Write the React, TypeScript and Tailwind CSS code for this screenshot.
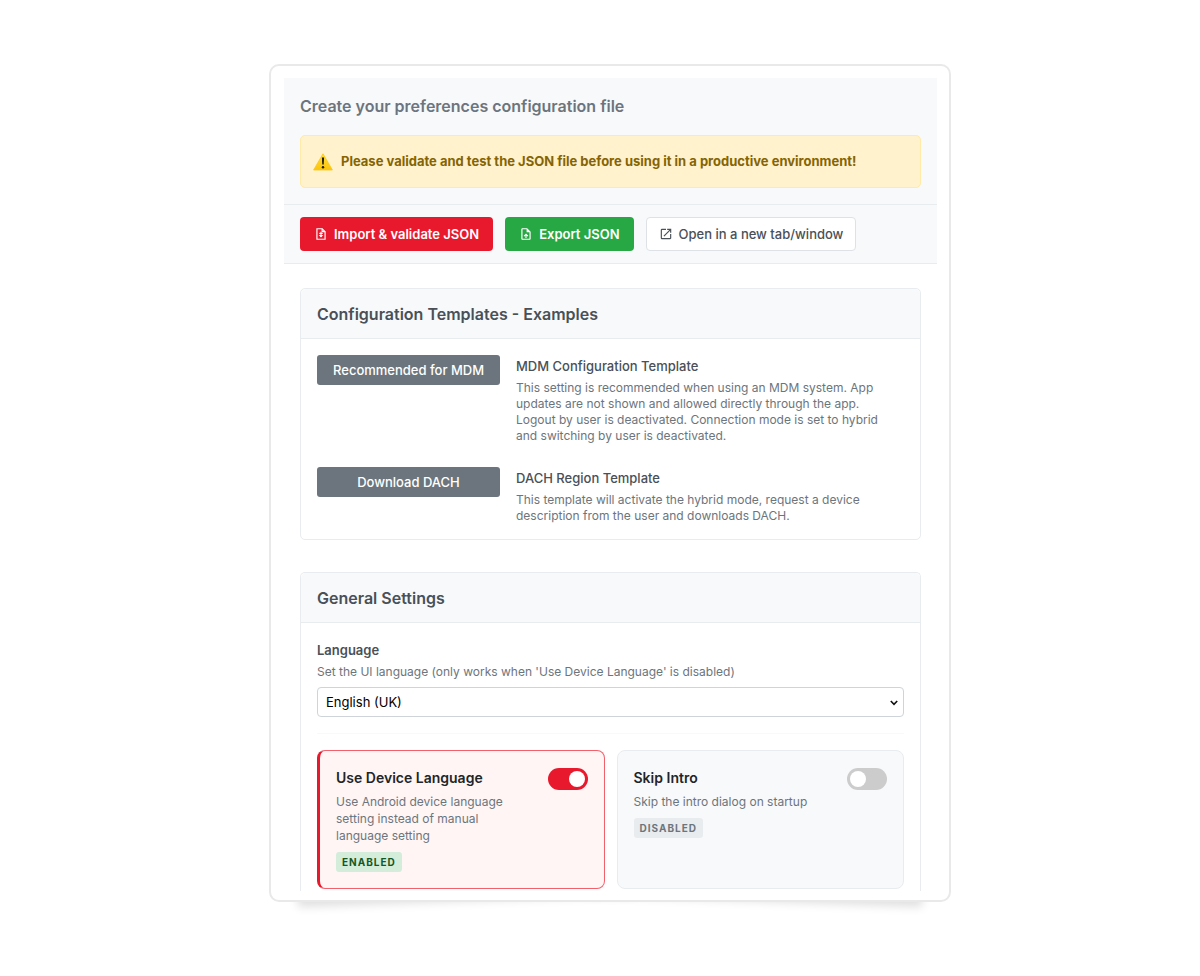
import { useState } from "react";
import type { ReactNode } from "react";
import { MdOpenInNew, MdOutlineUploadFile } from "react-icons/md";

const templates = [
  {
    action: "Recommended for MDM",
    title: "MDM Configuration Template",
    text: "This setting is recommended when using an MDM system. App updates are not shown and allowed directly through the app. Logout by user is deactivated. Connection mode is set to hybrid and switching by user is deactivated.",
  },
  {
    action: "Download DACH",
    title: "DACH Region Template",
    text: "This template will activate the hybrid mode, request a device description from the user and downloads DACH.",
  },
];

function WarningIcon() {
  return (
    <svg width="20" height="18" viewBox="0 0 20 18" className="shrink-0" aria-hidden="true">
      <defs>
        <linearGradient id="warn" x1="0" y1="0" x2="0" y2="1">
          <stop offset="0" stopColor="#ffdf3d" />
          <stop offset="1" stopColor="#fcc30b" />
        </linearGradient>
      </defs>
      <path d="M10 .8 19.4 17H.6z" fill="url(#warn)" stroke="#fbc615" strokeWidth="0.8" strokeLinejoin="round" />
      <path d="M8.9 4.6h2.2l-.4 7H9.3z" fill="#1d1a10" />
      <circle cx="10" cy="14.3" r="1.2" fill="#1d1a10" />
    </svg>
  );
}

function ImportIcon() {
  return (
    <svg width="14" height="14" viewBox="0 0 24 24" fill="none" stroke="currentColor" strokeWidth="2" aria-hidden="true">
      <path d="M14 3H5v18h14V8z" />
      <path d="M14 3v5h5" />
      <path d="M12 8v9" />
      <path d="M8 13.5 12 18l4-4.5z" fill="currentColor" stroke="none" />
      <path d="M9 11h6" />
    </svg>
  );
}

function Section({ title, open, children }: { title: string; open?: boolean; children: ReactNode }) {
  return (
    <section
      className={
        open
          ? "rounded-t-[5px] border border-b-0 border-[#e9ecef]"
          : "rounded-[5px] border border-[#e9ecef]"
      }
    >
      <h2 className="rounded-t-[5px] border-b border-[#e9ecef] bg-[#f8f9fb] px-4 pt-[13px] pb-3 text-base leading-6 font-semibold text-[#495057]">
        {title}
      </h2>
      {children}
    </section>
  );
}

interface ToggleCardProps {
  id: string;
  title: string;
  text: string;
  initial: boolean;
}

function ToggleCard({ id, title, text, initial }: ToggleCardProps) {
  const [on, setOn] = useState(initial);

  return (
    <div
      className={`flex items-start justify-between gap-4 rounded-lg border px-4 pt-[17px] pb-4 ${
        on ? "border-l-3 border-[#f2606c] border-l-[#e8192c] bg-[#fff5f5]" : "border-[#e9ecef] bg-[#f8f9fb]"
      }`}
    >
      <div className="max-w-[180px]">
        <label htmlFor={id} className="block text-sm leading-5 font-semibold text-[#212529]">
          {title}
        </label>
        <p className="mt-[5px] text-[12px] leading-[17px] text-[#6c757d]">{text}</p>
        <span
          className={`mt-2 inline-block rounded-[3px] px-1.5 text-[10px] leading-5 font-bold tracking-widest uppercase ${
            on ? "bg-[#d4edda] text-[#155724]" : "bg-[#e9ecef] text-[#6c757d]"
          }`}
        >
          {on ? "Enabled" : "Disabled"}
        </span>
      </div>
      <input
        id={id}
        type="checkbox"
        checked={on}
        onChange={(e) => setOn(e.target.checked)}
        className="h-[22px] w-10 shrink-0 appearance-none rounded-full bg-[#cccccc] p-[3px] before:block before:size-4 before:rounded-full before:bg-white checked:bg-[#e8192c] checked:before:ml-[18px]"
      />
    </div>
  );
}

export default function App() {
  return (
    <div className="min-h-screen bg-white py-16 pr-4 pl-9 font-[Inter,'Liberation_Sans',sans-serif]">
      <div className="relative mx-auto max-w-[682px]">
        {/* lifted corners: two tilted shadows under the bottom edge */}
        <div className="absolute bottom-4 left-7 h-5 w-1/2 -rotate-2 shadow-[0_15px_10px_rgba(0,0,0,0.13)]" />
        <div className="absolute right-7 bottom-4 h-5 w-1/2 rotate-2 shadow-[0_15px_10px_rgba(0,0,0,0.13)]" />

        <main className="relative rounded-[10px] border-2 border-[#e9e9e9] bg-white pt-3 pr-3 pb-[9px] pl-[13px]">
          <header className="border-b border-[#e9ecef] bg-[#f8f9fb] p-4">
            <h1 className="text-base leading-6 font-semibold text-[#6c757d]">
              Create your preferences configuration file
            </h1>
            <div className="mt-[17px] flex items-center gap-2 rounded-[5px] border border-[#ffeaa7] bg-[#fff2cd] px-3 py-4 text-[13px] leading-[19px] font-bold text-[#856404]">
              <WarningIcon />
              <p>Please validate and test the JSON file before using it in a productive environment!</p>
            </div>
          </header>

          <div className="flex flex-wrap gap-3 border-b border-[#e9ecef] bg-[#f8f9fb] px-4 py-3 text-[13px] leading-4">
            <button className="flex h-[34px] items-center gap-1.5 rounded bg-[#e8192c] px-3.5 font-semibold text-white">
              <ImportIcon />
              Import &amp; validate JSON
            </button>
            <button className="flex h-[34px] items-center gap-1.5 rounded bg-[#28a745] px-3.5 font-semibold text-white">
              <MdOutlineUploadFile size={14} />
              Export JSON
            </button>
            <button className="flex h-[34px] items-center gap-1.5 rounded border border-[#dee2e6] bg-white px-3 font-medium text-[#495057]">
              <MdOpenInNew size={14} />
              Open in a new tab/window
            </button>
          </div>

          <div className="flex flex-col gap-8 px-4 pt-6">
            <Section title="Configuration Templates - Examples">
              <div className="flex flex-col gap-[23px] px-4 pt-4 pb-[15px]">
                {templates.map((tpl) => (
                  <div key={tpl.action} className="grid grid-cols-[183px_1fr] items-start gap-4 pr-4">
                    <button className="h-[30px] rounded-[3px] bg-[#6c757d] pt-0.5 text-[13px] font-medium text-white">
                      {tpl.action}
                    </button>
                    <div>
                      <h3 className="text-[13px] leading-[22px] font-medium text-[#495057]">{tpl.title}</h3>
                      <p className="mt-[3px] text-[12px] leading-4 text-[#6c757d]">{tpl.text}</p>
                    </div>
                  </div>
                ))}
              </div>
            </Section>

            <Section title="General Settings" open>
              <div className="px-4 pt-4 pb-0.5">
                <div className="border-b border-[#f8f9fa] pb-4">
                  <label htmlFor="language" className="block text-[13px] leading-[22px] font-semibold text-[#495057]">
                    Language
                  </label>
                  <p className="mt-[3px] text-[12px] leading-4 text-[#6c757d]">
                    Set the UI language (only works when 'Use Device Language' is disabled)
                  </p>
                  <div className="relative mt-[7px]">
                    <select
                      id="language"
                      defaultValue="en-GB"
                      className="block h-[30px] w-full appearance-none rounded border border-[#ced4da] bg-white px-2 pt-0.5 text-[13px] text-black"
                    >
                      <option value="en-GB">English (UK)</option>
                      <option value="de">Deutsch</option>
                      <option value="fr">Français</option>
                    </select>
                    <svg
                      width="8"
                      height="6"
                      viewBox="0 0 8 6"
                      className="pointer-events-none absolute top-[13px] right-1.5"
                      aria-hidden="true"
                    >
                      <path d="M.8 1 4 4.4 7.2 1" fill="none" stroke="#111" strokeWidth="1.6" />
                    </svg>
                  </div>
                </div>

                <div className="grid grid-cols-2 gap-3 pt-4">
                  <ToggleCard
                    id="device-language"
                    title="Use Device Language"
                    text="Use Android device language setting instead of manual language setting"
                    initial={true}
                  />
                  <ToggleCard
                    id="skip-intro"
                    title="Skip Intro"
                    text="Skip the intro dialog on startup"
                    initial={false}
                  />
                </div>
              </div>
            </Section>
          </div>
        </main>
      </div>
    </div>
  );
}
